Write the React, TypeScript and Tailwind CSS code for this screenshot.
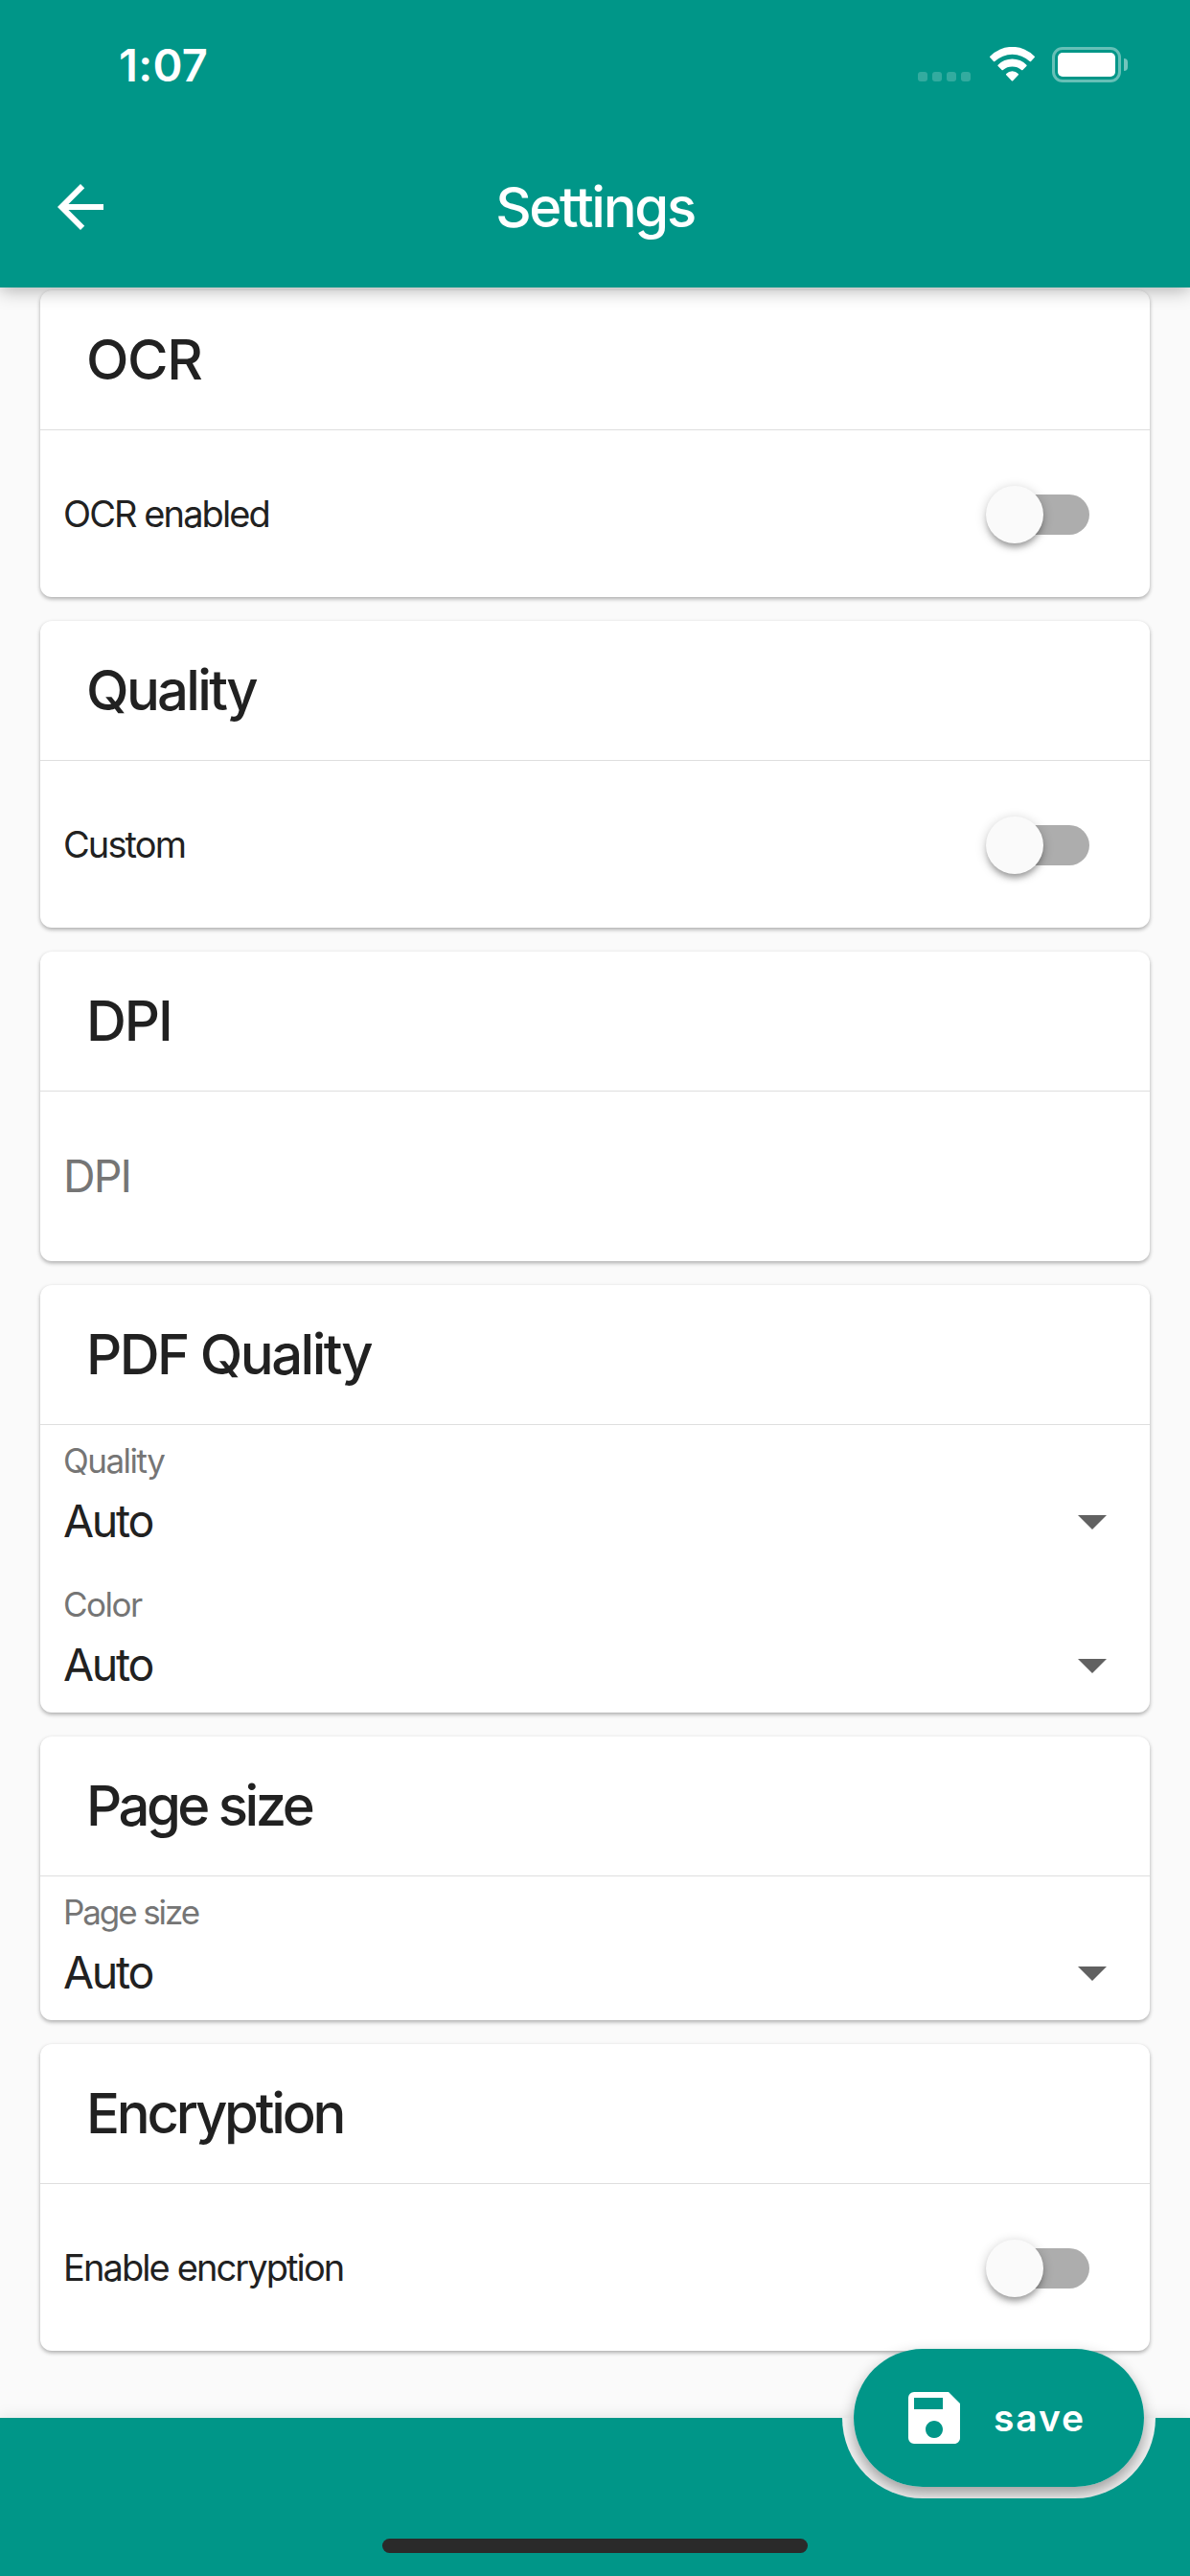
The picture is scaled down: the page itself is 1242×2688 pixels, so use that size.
import React, { useState } from "react";
import { MdArrowBack, MdSave } from "react-icons/md";
import clsx from "clsx";

interface SectionProps {
    title: string;
    tracking?: string;
    children: React.ReactNode;
}

function Section({ title, tracking = "tracking-[-1.7px]", children }: SectionProps) {
    return (
        <section className="rounded-[12px] bg-white shadow-[0_2px_4px_rgba(0,0,0,0.32)]">
            <h2
                className={clsx(
                    "flex h-[146px] items-center border-b border-[#dedede] pl-[48px] text-[58px] font-medium",
                    tracking
                )}
            >
                {title}
            </h2>
            {children}
        </section>
    );
}

function SwitchRow({ label }: { label: string }) {
    const [on, setOn] = useState(false);

    return (
        <div className="flex h-[174px] items-center justify-between pr-[63px] pl-[24px]">
            <span className="text-[38px] tracking-[-1.9px]">{label}</span>
            <button
                role="switch"
                aria-checked={on}
                aria-label={label}
                onClick={() => setOn(!on)}
                className="mt-px flex h-[42px] w-[99px] items-center rounded-full bg-[#adadad]"
            >
                <span
                    className={clsx(
                        "-ml-[9px] size-[60px] shrink-0 rounded-full bg-[#fafafa] shadow-[0_6px_6px_-2px_rgba(0,0,0,0.3),0_2px_12px_rgba(0,0,0,0.2)]",
                        on && "translate-x-[57px]"
                    )}
                />
            </button>
        </div>
    );
}

interface SelectRowProps {
    label: string;
    value: string;
    tracking?: string;
}

function SelectRow({ label, value, tracking = "tracking-[-1.5px]" }: SelectRowProps) {
    return (
        <div className="flex h-[150px] items-center justify-between pr-[45px] pl-[24px]">
            <div className="flex h-full flex-col pt-[15px]">
                <span className={clsx("text-[35px] leading-[45px] text-[#757575]", tracking)}>{label}</span>
                <span className="pt-[10px] text-[46.5px] leading-[61px] tracking-[-2.3px]">{value}</span>
            </div>
            <svg viewBox="0 0 30 15" className="mt-[53px] h-[15px] w-[30px] fill-[#616161]">
                <path d="M0 0h30L15 15z" />
            </svg>
        </div>
    );
}

function StatusBar() {
    return (
        <div className="flex h-[132px] justify-between pr-[65px] pl-[124px] text-white">
            <span className="pt-[38px] text-[47px] leading-[60px] font-semibold tracking-[0.3px]">1:07</span>
            <div className="flex pt-[49px]">
                <div className="mt-[26px] flex gap-[5px]">
                    {[0, 1, 2, 3].map((i) => (
                        <span key={i} className="size-[10px] rounded-[3px] bg-white/20" />
                    ))}
                </div>
                <svg viewBox="0 0 142 108" className="ml-[20px] h-[36px] w-[47px] fill-white">
                    <path d="M1 29A97 97 0 0 1 141 29Q143 31 141 33L130 45Q128 47 126 45A80 80 0 0 0 16 45Q14 47 12 45L1 33Q-1 31 1 29z" />
                    <path d="M26 56A63 63 0 0 1 116 56Q118 58 116 60L104 72Q102 74 100 72A46 46 0 0 0 42 72Q40 74 38 72L26 60Q24 58 26 56z" />
                    <path d="M52 84A27 27 0 0 1 90 84Q92 86 90 88L73 106Q71 108 69 106L52 88Q50 86 52 84z" />
                </svg>
                <div className="ml-[18px] h-[37px] w-[72px] rounded-[11px] border-[3px] border-white/40 p-[3px]">
                    <div className="h-[25px] w-[60px] rounded-[5px] bg-white" />
                </div>
                <div className="mt-[12px] ml-[3px] h-[13px] w-[4px] rounded-r-full bg-white/45" />
            </div>
        </div>
    );
}

export default function App() {
    return (
        <div className="relative flex h-[2688px] w-[1242px] flex-col overflow-hidden bg-[#fafafa] font-['Inter',sans-serif] text-[#212121]">
            {/* App bar */}
            <header className="relative z-10 h-[300px] bg-[#009688] text-white shadow-[0_3px_18px_rgba(0,0,0,0.3)]">
                <StatusBar />
                <div className="grid h-[168px] grid-cols-[1fr_auto_1fr] items-center px-[48px]">
                    <MdArrowBack className="size-[72px]" />
                    <h1 className="text-[58px] font-medium tracking-[-2.3px]">Settings</h1>
                </div>
            </header>

            {/* Settings */}
            <main className="flex flex-1 flex-col gap-[25px] px-[42px] pt-[3px]">
                <Section title="OCR" tracking="tracking-[-1.4px]">
                    <SwitchRow label="OCR enabled" />
                </Section>
                <Section title="Quality" tracking="tracking-[-2.7px]">
                    <SwitchRow label="Custom" />
                </Section>
                <Section title="DPI" tracking="tracking-[-2px]">
                    <div className="flex h-[177px] items-center pl-[24px] text-[46.5px] tracking-[-1.9px] text-[#757575]">
                        DPI
                    </div>
                </Section>
                <Section title="PDF Quality" tracking="tracking-[-2.5px]">
                    <SelectRow label="Quality" value="Auto" />
                    <SelectRow label="Color" value="Auto" />
                </Section>
                <Section title="Page size" tracking="tracking-[-3.5px]">
                    <SelectRow label="Page size" value="Auto" tracking="tracking-[-2.1px]" />
                </Section>
                <Section title="Encryption" tracking="tracking-[-3.2px]">
                    <SwitchRow label="Enable encryption" />
                </Section>
            </main>

            {/* The button's shadow falls on the page and inside the notch, never on the bar */}
            <div className="absolute right-[48px] bottom-[93px] h-[144px] w-[303px] rounded-full shadow-[0_6px_15px_rgba(0,0,0,0.3)]" />

            <footer className="relative flex h-[165px] flex-col items-center justify-end bg-[#009688] pb-[24px] shadow-[0_0_16px_rgba(0,0,0,0.1)]">
                <div className="absolute top-0 right-[36px] h-[84px] w-[327px] overflow-hidden rounded-b-[84px] bg-[#f4f4f4]">
                    <div className="absolute bottom-[12px] left-[12px] h-[144px] w-[303px] rounded-full shadow-[0_7px_15px_rgba(0,0,0,0.36)]" />
                </div>
                <button className="absolute right-[48px] bottom-[93px] flex h-[144px] w-[303px] items-center rounded-full bg-[#009688] pl-[48px] text-white">
                    <MdSave className="size-[72px]" />
                    <span className="ml-[26px] pt-px text-[39px] font-semibold tracking-[1.9px]">save</span>
                </button>
                <div className="h-[15px] w-[444px] rounded-full bg-[#2a2a2a]" />
            </footer>
        </div>
    );
}
